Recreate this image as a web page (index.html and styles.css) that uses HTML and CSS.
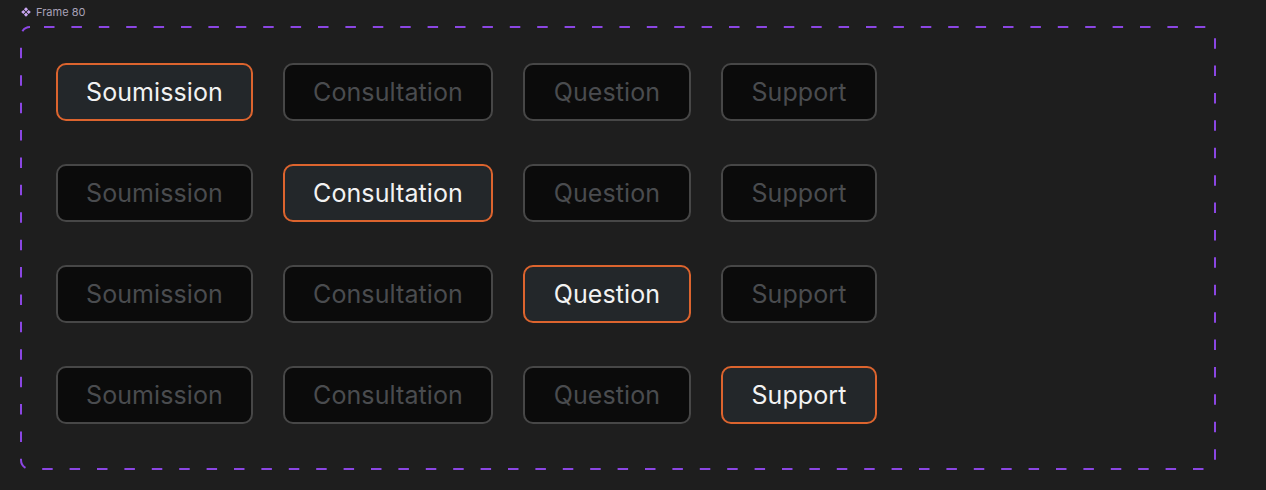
FILE: index.html
```html
<!DOCTYPE html>
<html lang="fr">
<head>
<meta charset="utf-8">
<title>Frame 80</title>
<link rel="stylesheet" href="styles.css">
</head>
<body>
  <div class="label">
    <svg class="comp-icon" width="10" height="10" viewBox="0 0 10 10" aria-hidden="true">
      <path d="M5 0.2 L7.1 2.3 L5 4.4 L2.9 2.3 Z" />
      <path d="M5 5.6 L7.1 7.7 L5 9.8 L2.9 7.7 Z" />
      <path d="M2.3 2.9 L4.4 5 L2.3 7.1 L0.2 5 Z" />
      <path d="M7.7 2.9 L9.8 5 L7.7 7.1 L5.6 5 Z" />
    </svg>
    <span>Frame 80</span>
  </div>
  <div class="frame">
    <svg class="frame-border" width="1196" height="444" viewBox="0 0 1196 444" aria-hidden="true">
      <rect x="1" y="1" width="1194" height="442" rx="9" ry="9" />
    </svg>
    <div class="grid">
      <div class="btn active">Soumission</div>
      <div class="btn">Consultation</div>
      <div class="btn">Question</div>
      <div class="btn">Support</div>

      <div class="btn">Soumission</div>
      <div class="btn active">Consultation</div>
      <div class="btn">Question</div>
      <div class="btn">Support</div>

      <div class="btn">Soumission</div>
      <div class="btn">Consultation</div>
      <div class="btn active">Question</div>
      <div class="btn">Support</div>

      <div class="btn">Soumission</div>
      <div class="btn">Consultation</div>
      <div class="btn">Question</div>
      <div class="btn active">Support</div>
    </div>
  </div>
</body>
</html>
```

FILE: styles.css
```css
* { box-sizing: border-box; }

html, body {
  margin: 0;
  padding: 0;
  background: #1e1e1e;
  width: 1266px;
  height: 490px;
  overflow: hidden;
  font-family: Inter, "Noto Sans", sans-serif;
}

.label {
  display: flex;
  align-items: center;
  gap: 5px;
  height: 12px;
  margin: 6px 0 0 21px;
  font-size: 11px;
  color: #a9a2b8;
  line-height: 12px;
}

.comp-icon {
  fill: #c9a6f2;
  flex: none;
}

.frame {
  position: relative;
  width: 1196px;
  height: 444px;
  margin: 8px 0 0 20px;
  padding: 37px 0 0 36px;
}

.frame-border {
  position: absolute;
  left: 0;
  top: 0;
  pointer-events: none;
}

.frame-border rect {
  fill: none;
  stroke: #8b46e3;
  stroke-width: 2;
  stroke-dasharray: 10.5 16.9;
  stroke-dashoffset: -14;
}

.grid {
  display: grid;
  grid-template-columns: 197px 210px 168px 156px;
  column-gap: 30px;
  row-gap: 43px;
}

.btn {
  height: 58px;
  border: 2px solid #474747;
  border-radius: 10px;
  background: #0b0b0b;
  color: #4a4c4f;
  font-size: 25px;
  display: flex;
  align-items: center;
  justify-content: center;
  letter-spacing: 0.1px;
}

.btn.active {
  border-color: #dc642e;
  background: #23272a;
  color: #f2f2f2;
}
```
